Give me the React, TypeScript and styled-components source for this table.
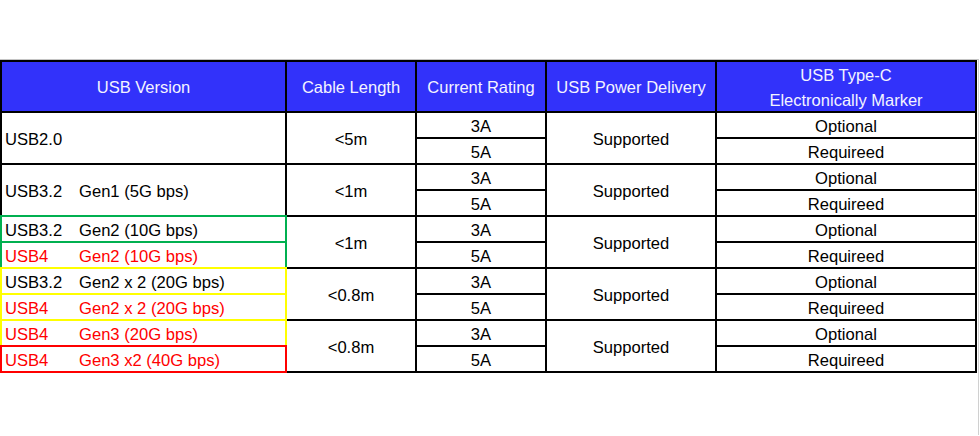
import React from "react";
import styled, { createGlobalStyle } from "styled-components";

const Global = createGlobalStyle`
  html, body { margin: 0; padding: 0; background: #ffffff; }
  body { font-family: "Liberation Sans", Arial, sans-serif; }
`;

const Page = styled.div`
  width: 980px;
  height: 436px;
  padding-top: 59px;
  box-sizing: border-box;
  background: #ffffff;
`;

const Sheet = styled.div`
  border-top: 1px solid #c4c4c4;
  width: 979px;
  border-right: 1px solid #d0d0d0;
  height: 376px;
  box-sizing: border-box;
`;

const Grid = styled.div`
  display: grid;
  grid-template-columns: 283px 128px 128px 168px 258px;
  grid-template-rows: 49px repeat(10, 24px);
  gap: 2px;
  padding: 2px;
  background: #000000;
  width: fit-content;
`;

const Head = styled.div<{ $col: number }>`
  grid-column: ${(p) => p.$col};
  grid-row: 1;
  background: #3232fa;
  color: #f4f4ff;
  font-size: 16.5px;
  line-height: 25px;
  padding-top: 2px;
  box-sizing: border-box;
  display: flex;
  flex-direction: column;
  align-items: center;
  justify-content: center;
  text-align: center;
`;

const Cell = styled.div<{ $col: number; $row: number; $span?: number }>`
  grid-column: ${(p) => p.$col};
  grid-row: ${(p) => p.$row} / span ${(p) => p.$span ?? 1};
  background: #ffffff;
  color: #000000;
  font-size: 16.6px;
  padding-top: 3px;
  box-sizing: border-box;
  display: flex;
  align-items: center;
  justify-content: center;
  white-space: nowrap;
`;

const VersionCell = styled.div<{ $row: number; $span?: number; $frame?: string }>`
  grid-column: 1;
  grid-row: ${(p) => p.$row} / span ${(p) => p.$span ?? 1};
  background: #ffffff;
  font-size: 16.6px;
  display: flex;
  align-items: center;
  padding: 3px 0 0 3px;
  box-sizing: border-box;
  white-space: nowrap;
  box-shadow: ${(p) => (p.$frame ? `0 0 0 2px ${p.$frame}` : "none")};
`;

const Std = styled.span<{ $red?: boolean }>`
  width: 74px;
  color: ${(p) => (p.$red ? "#ff0000" : "#000000")};
`;

const Gen = styled.span<{ $red?: boolean }>`
  color: ${(p) => (p.$red ? "#ff0000" : "#000000")};
`;

type Version = { std: string; gen?: string; red?: boolean; frame?: string };

const groups: { versions: Version[]; length: string }[] = [
  { versions: [{ std: "USB2.0" }], length: "<5m" },
  { versions: [{ std: "USB3.2", gen: "Gen1 (5G bps)" }], length: "<1m" },
  {
    versions: [
      { std: "USB3.2", gen: "Gen2 (10G bps)", frame: "#00b050" },
      { std: "USB4", gen: "Gen2 (10G bps)", red: true, frame: "#00b050" },
    ],
    length: "<1m",
  },
  {
    versions: [
      { std: "USB3.2", gen: "Gen2 x 2 (20G bps)", frame: "#ffff00" },
      { std: "USB4", gen: "Gen2 x 2 (20G bps)", red: true, frame: "#ffff00" },
    ],
    length: "<0.8m",
  },
  {
    versions: [
      { std: "USB4", gen: "Gen3 (20G bps)", red: true, frame: "#ffff00" },
      { std: "USB4", gen: "Gen3 x2 (40G bps)", red: true, frame: "#ff0000" },
    ],
    length: "<0.8m",
  },
];

export default function App() {
  return (
    <Page>
      <Global />
      <Sheet>
        <Grid>
          <Head $col={1}>USB Version</Head>
          <Head $col={2}>Cable Length</Head>
          <Head $col={3}>Current Rating</Head>
          <Head $col={4}>USB Power Delivery</Head>
          <Head $col={5}>
            <span>USB Type-C</span>
            <span>Electronically Marker</span>
          </Head>
          {groups.map((g, i) => {
            const r = 2 + i * 2;
            return (
              <React.Fragment key={i}>
                {g.versions.length === 1 ? (
                  <VersionCell $row={r} $span={2}>
                    <Std>{g.versions[0].std}</Std>
                    {g.versions[0].gen && <Gen>{g.versions[0].gen}</Gen>}
                  </VersionCell>
                ) : (
                  g.versions.map((v, j) => (
                    <VersionCell key={j} $row={r + j} $frame={v.frame}>
                      <Std $red={v.red}>{v.std}</Std>
                      <Gen $red={v.red}>{v.gen}</Gen>
                    </VersionCell>
                  ))
                )}
                <Cell $col={2} $row={r} $span={2}>{g.length}</Cell>
                <Cell $col={3} $row={r}>3A</Cell>
                <Cell $col={3} $row={r + 1}>5A</Cell>
                <Cell $col={4} $row={r} $span={2}>Supported</Cell>
                <Cell $col={5} $row={r}>Optional</Cell>
                <Cell $col={5} $row={r + 1}>Requireed</Cell>
              </React.Fragment>
            );
          })}
        </Grid>
      </Sheet>
    </Page>
  );
}
